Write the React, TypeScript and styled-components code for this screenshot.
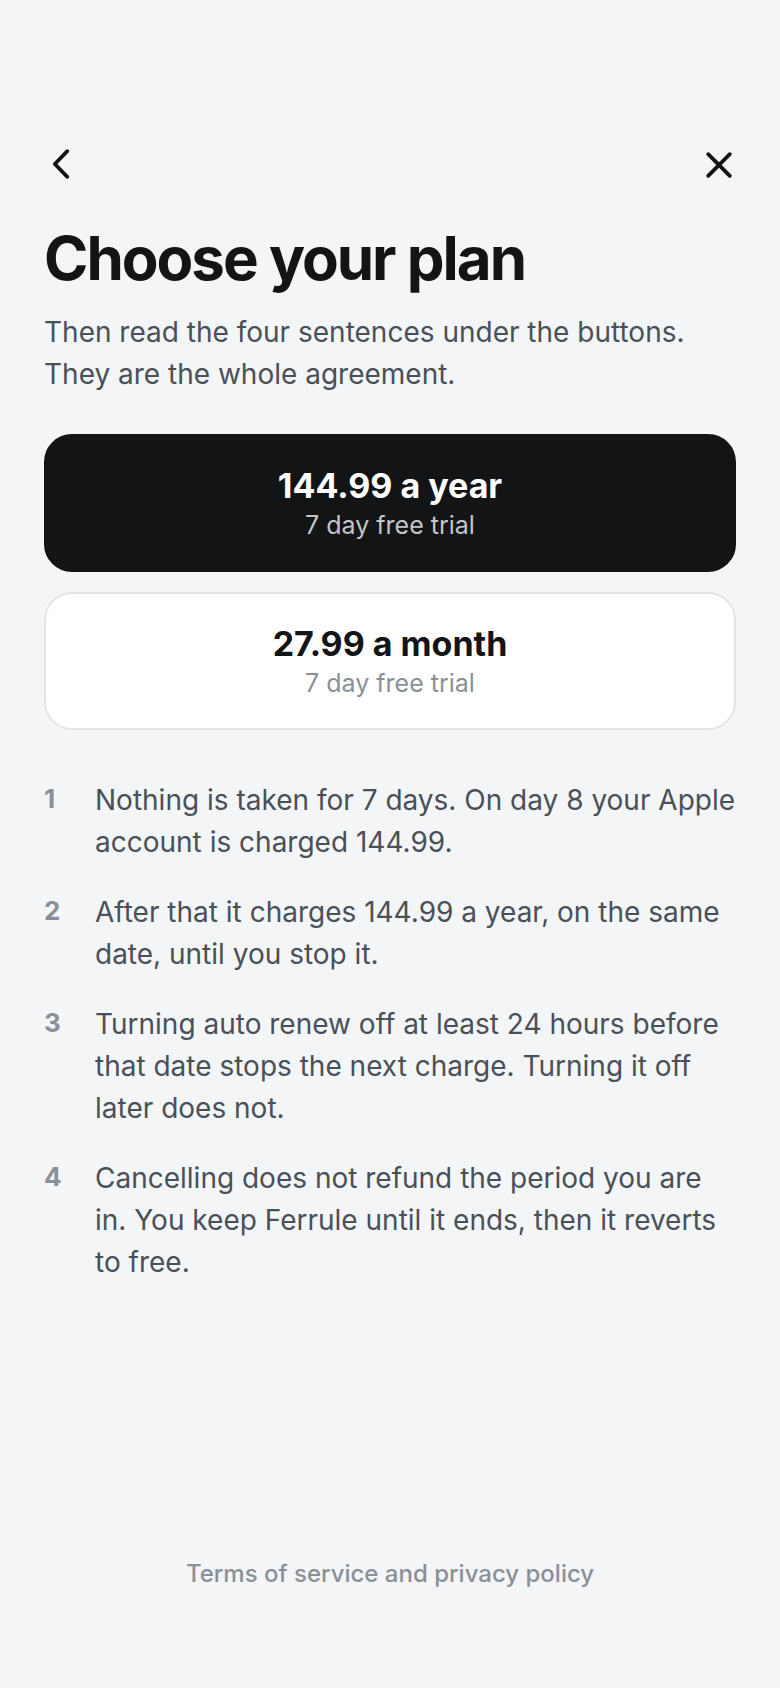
import React from 'react'
import styled, { createGlobalStyle, css } from 'styled-components'

const GlobalStyle = createGlobalStyle`
  * {
    box-sizing: border-box;
  }

  body {
    margin: 0;
    background: #f3f5f7;
    color: #121416;
    font-family: Inter, 'Liberation Sans', sans-serif;
  }
`

const Screen = styled.main`
  display: flex;
  flex-direction: column;
  min-height: 100vh;
  padding: 136px 44px 96px;
`

const TopBar = styled.header`
  display: flex;
  justify-content: space-between;
  align-items: center;
  height: 56px;
`

const IconButton = styled.button`
  display: flex;
  padding: 0;
  border: none;
  background: none;
  color: inherit;
  cursor: pointer;
`

const Title = styled.h1`
  margin: 33px 0 0;
  font-size: 60px;
  line-height: 66px;
  font-weight: 700;
  letter-spacing: -2px;
`

const Intro = styled.p`
  margin: 20px 0 0;
  color: #4a5057;
  font-size: 28px;
  line-height: 42px;
`

const Plans = styled.div`
  display: flex;
  flex-direction: column;
  gap: 20px;
  margin-top: 39px;
`

const PlanNote = styled.span`
  font-size: 25px;
  line-height: 34px;
`

const PlanPrice = styled.span`
  font-size: 34px;
  line-height: 44px;
  font-weight: 700;
`

const PlanButton = styled.button<{ $primary?: boolean }>`
  display: flex;
  flex-direction: column;
  align-items: center;
  padding: 28px;
  border: 2px solid #e2e4e6;
  border-radius: 28px;
  background: #fff;
  color: #121416;
  font-family: inherit;
  cursor: pointer;

  ${PlanNote} {
    color: #8a9097;
  }

  ${(props) => props.$primary && css`
    border-color: #121416;
    background: #121416;
    color: #fff;

    ${PlanNote} {
      color: #c4c5c6;
    }
  `}
`

const Terms = styled.ol`
  display: flex;
  flex-direction: column;
  gap: 28px;
  margin: 49px 0 0;
  padding: 0;
  list-style: none;
`

const Term = styled.li`
  display: flex;
  color: #4a5057;
  font-size: 28px;
  line-height: 42px;
`

const TermNumber = styled.span`
  flex: 0 0 51px;
  color: #8a9097;
  font-size: 26px;
  line-height: 40px;
  font-weight: 700;
`

const Footer = styled.footer`
  margin-top: auto;
  text-align: center;
`

const LegalLink = styled.a`
  color: #8a9097;
  font-size: 24px;
  line-height: 36px;
  font-weight: 500;
  text-decoration: none;
`

const plans = [
  { price: '144.99 a year', note: '7 day free trial', primary: true },
  { price: '27.99 a month', note: '7 day free trial', primary: false },
]

const terms = [
  'Nothing is taken for 7 days. On day 8 your Apple account is charged 144.99.',
  'After that it charges 144.99 a year, on the same date, until you stop it.',
  'Turning auto renew off at least 24 hours before that date stops the next charge. Turning it off later does not.',
  'Cancelling does not refund the period you are in. You keep Ferrule until it ends, then it reverts to free.',
]

const App = () => {
  return (
    <>
      <GlobalStyle />
      <Screen>
        <TopBar>
          <IconButton type="button" aria-label="Back">
            <svg width="36" height="36" viewBox="0 0 36 36" fill="none" stroke="currentColor" strokeWidth="3.8" strokeLinecap="round" strokeLinejoin="round">
              <path d="M23.2 5.2L10.8 18L23.2 30.8" />
            </svg>
          </IconButton>
          <IconButton type="button" aria-label="Close">
            <svg width="36" height="36" viewBox="0 0 36 36" fill="none" stroke="currentColor" strokeWidth="3.8" strokeLinecap="round">
              <path d="M8.2 8.2L29.8 29.8M29.8 8.2L8.2 29.8" />
            </svg>
          </IconButton>
        </TopBar>
        <Title>Choose your plan</Title>
        <Intro>
          Then read the four sentences under the buttons. They are the whole agreement.
        </Intro>
        <Plans>
          {plans.map((plan) => (
            <PlanButton key={plan.price} type="button" $primary={plan.primary}>
              <PlanPrice>{plan.price}</PlanPrice>
              <PlanNote>{plan.note}</PlanNote>
            </PlanButton>
          ))}
        </Plans>
        <Terms>
          {terms.map((term, index) => (
            <Term key={term}>
              <TermNumber>{index + 1}</TermNumber>
              <span>{term}</span>
            </Term>
          ))}
        </Terms>
        <Footer>
          <LegalLink href="#terms">Terms of service and privacy policy</LegalLink>
        </Footer>
      </Screen>
    </>
  )
}

export default App
